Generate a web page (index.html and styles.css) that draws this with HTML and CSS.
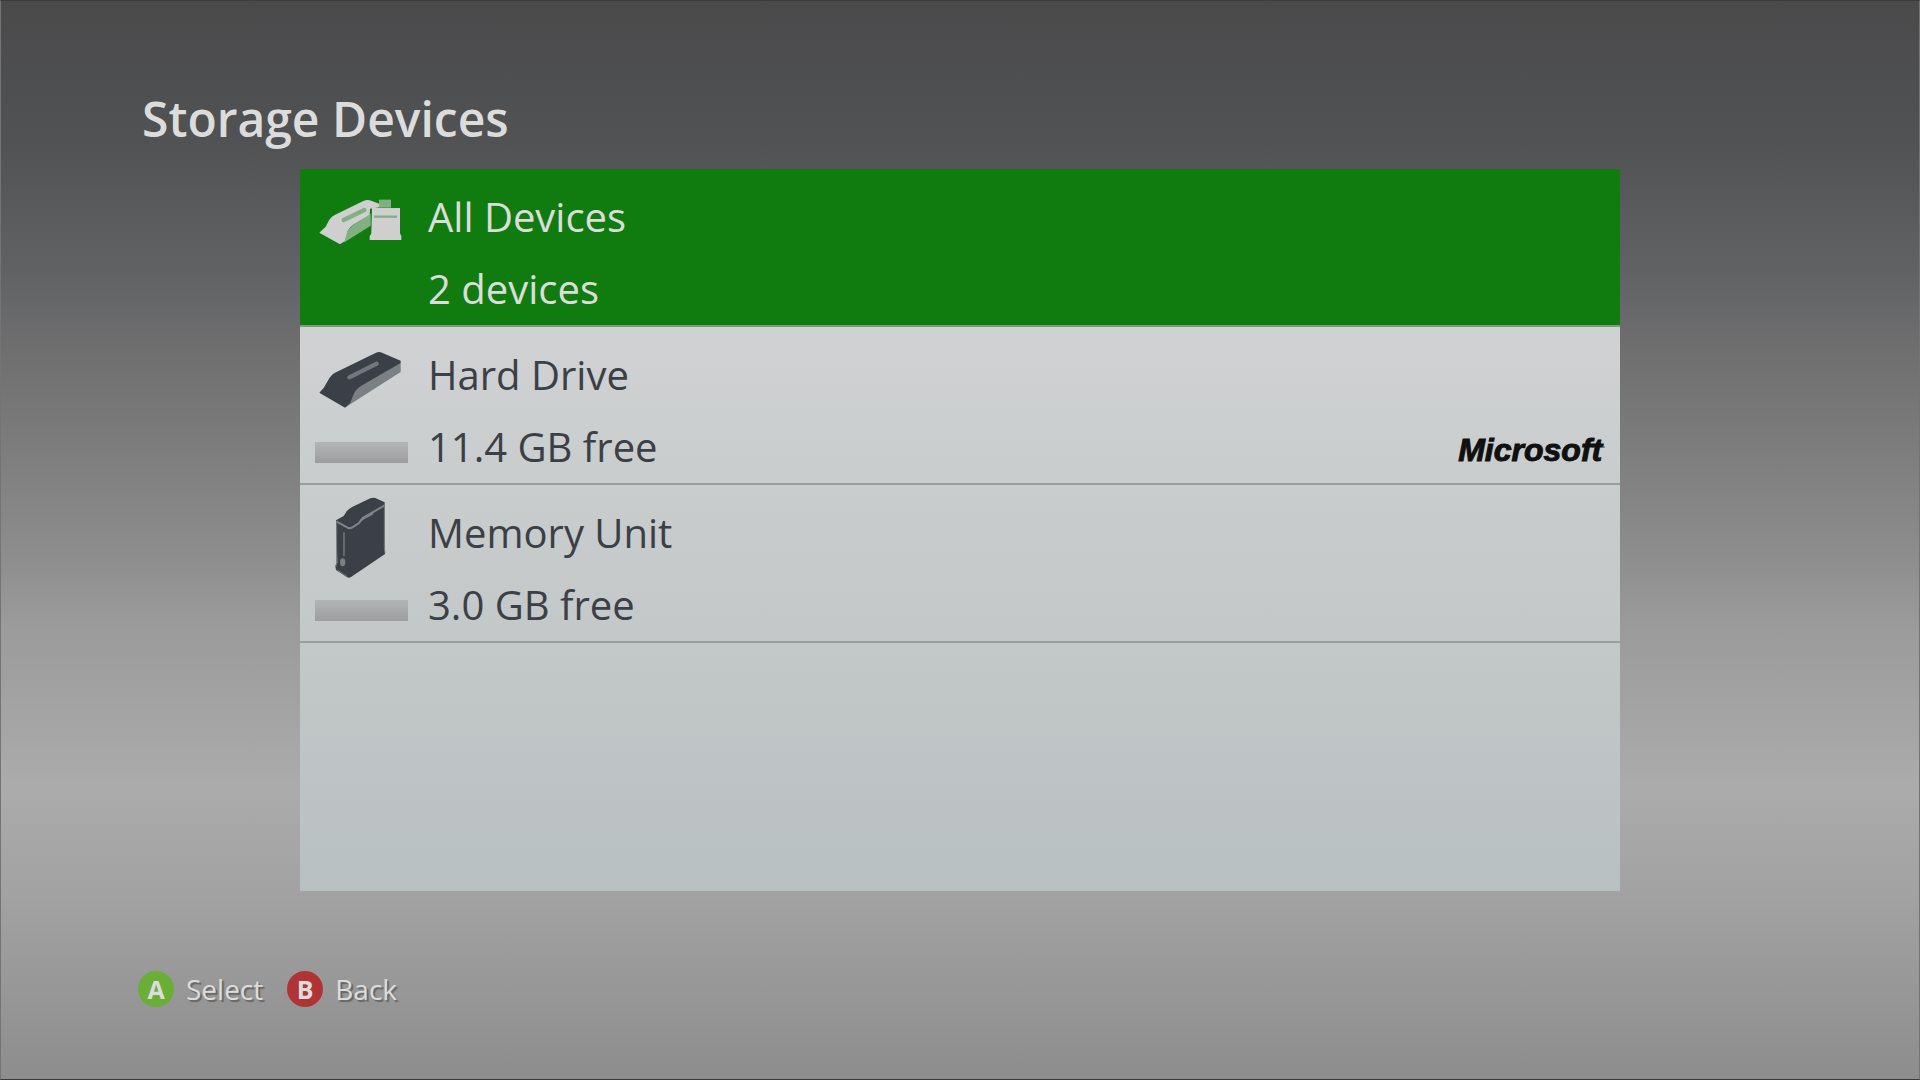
FILE: index.html
```html
<!DOCTYPE html>
<html lang="en">
	<head>
		<meta charset="UTF-8">
		<title>Storage Devices</title>
		<link rel="stylesheet" href="styles.css">
	</head>
	<body>
		<div class="screen">
			<h1 class="title">Storage Devices</h1>
			<ul class="deviceList">
				<li>
					<button type="button" class="device selected">
						<span class="media">
							<svg class="icon" viewBox="15 -33 279 345" aria-hidden="true">
								<path class="side" d="M90 191 L113 152 Q122 140 134 132 L182 101 L182 137 L108 184Z"/>
								<path d="M28 158 L47 140 L58 119 Q64 110 74 105 L160 63 Q172 57 184 62 L207 71 L209 82 L180 86 L179 104 L132 133 Q118 141 112 154 L104 182 L90 193Z"/>
								<path class="groove" d="M101 120 L163 90"/>
								<path class="side" d="M207 59 H243 V83 H207Z"/>
								<path d="M186 84 H270 V158 Q271 164 274 168 V180 H179 V168 Q184 164 184 158Z"/>
								<path class="seam" d="M192 110 H261"/>
							</svg>
						</span>
						<span class="info">
							<span class="line">All Devices</span>
							<span class="line">2 devices</span>
						</span>
					</button>
				</li>
				<li>
					<button type="button" class="device">
						<span class="media">
							<svg class="icon" viewBox="15 -39 279 345" aria-hidden="true">
								<path class="side" d="M107 202 L128 156 Q134 142 149 133 L272 65 V96 L158 169Z"/>
								<path d="M28 158 Q43 145 51 127 Q61 106 75 98 L198 38 Q208 34 216 38 L272 62 V69 L154 137 Q138 146 131 163 L121 188 L105 203Z"/>
								<path class="groove" d="M118 112 L200 71"/>
							</svg>
							<span class="space"></span>
						</span>
						<span class="info">
							<span class="line">Hard Drive</span>
							<span class="line">11.4 GB free</span>
						</span>
						<span class="brand">Microsoft<span class="mark">&bull;</span></span>
					</button>
				</li>
				<li>
					<button type="button" class="device">
						<span class="media">
							<svg class="icon" viewBox="15 0 279 345" aria-hidden="true">
								<path d="M78 106 L101 93 Q111 72 128 65 L181 40 Q189 37 196 39 L224 52 V190 L225 207 L122 277 Q116 280 110 276 L78 255 L76 243 L82 234 Z"/>
								<path class="rim" d="M79 109 L115 129 Q121 131 127 127 L147 114 L157 100 L224 61"/>
								<path class="rimFill" d="M145 115 Q151 101 163 94 L194 76 L188 89 L165 101Z"/>
								<path class="edge" d="M80 112 V234 L77 246 M223 65 V188 L225 204 M82 255 L112 275"/>
								<path class="slot" d="M102 142 V213"/>
								<ellipse class="side" cx="98" cy="232" rx="8" ry="12"/>
							</svg>
							<span class="space"></span>
						</span>
						<span class="info">
							<span class="line">Memory Unit</span>
							<span class="line">3.0 GB free</span>
						</span>
					</button>
				</li>
			</ul>
			<div class="legend">
				<button type="button" class="command"><span class="key keyA">A</span>Select</button>
				<button type="button" class="command"><span class="key keyB">B</span>Back</button>
			</div>
		</div>
	</body>
</html>
```
FILE: styles.css
```css
* {
	box-sizing: border-box;
}
body {
	margin: 0;
	font-family: "Open Sans", "Noto Sans", sans-serif;
	color: #dcdcdc;
}
button {
	font: inherit;
	color: inherit;
	background: none;
	border: 0;
	padding: 0;
	cursor: pointer;
}
.screen {
	display: flex;
	flex-direction: column;
	min-height: 100vh;
	padding: 84px 137px 71px;
	background: linear-gradient(#4a4a4b 0%, #515254 13%, #616264 25%, #6e6e6f 32%, #7c7c7c 41%, #8c8c8c 51%, #9b9b9c 58%, #ababab 73%, #a2a2a2 83%, #8d8d8e 100%);
	border: 1px solid #747475;
	border-top-color: #3c3c3d;
	border-bottom-color: #3a3a3a;
}
.title {
	margin: 0;
	padding-left: 4px;
	font-size: 48px;
	line-height: 68px;
	font-weight: 600;
}

/* device list */
.deviceList {
	flex: 1;
	list-style: none;
	margin: 16px 162px 0;
	padding: 0;
	background: linear-gradient(#d5d5d7 0%, #cfd1d3 25%, #c6caca 55%, #b9c0c2 100%);
}
.device {
	display: flex;
	width: 100%;
	padding: 0 15px;
	gap: 20px;
	border-bottom: 2px solid #979ea0;
	color: #3a4046;
	text-align: left;
}
.device.selected {
	background: #107c10;
	border-bottom-color: #7d9a80;
	color: #dcdcdc;
}
.media {
	display: flex;
	flex-direction: column;
	width: 93px;
}
.info {
	display: flex;
	flex-direction: column;
	flex: 1;
	padding-top: 12px;
}
.line {
	font-size: 40px;
	line-height: 72px;
}
.space {
	height: 21px;
	background: linear-gradient(#b4b5b6, #9c9d9f);
}
.brand {
	align-self: flex-end;
	padding-bottom: 15px;
	font-family: "Liberation Sans", Arial, sans-serif;
	font-size: 32px;
	line-height: 36px;
	font-weight: bold;
	font-style: italic;
	color: #101010;
	-webkit-text-stroke: 1px #101010;
}
.mark {
	font-size: 8px;
	vertical-align: 12px;
	color: #777;
	-webkit-text-stroke: 0;
}

/* icons */
.icon {
	width: 93px;
	height: 115px;
	fill: #3a4046;
}
.icon .side {
	fill: #7a8083;
}
.icon .groove {
	fill: none;
	stroke: #71777b;
	stroke-width: 13;
	stroke-linecap: round;
}
.icon .rim {
	fill: none;
	stroke: #7e8487;
	stroke-width: 6;
}
.icon .rimFill {
	fill: #7e8487;
}
.icon .edge {
	fill: none;
	stroke: #737a7e;
	stroke-width: 3;
}
.icon .slot {
	fill: none;
	stroke: #6d7377;
	stroke-width: 5;
}
.selected .icon {
	fill: #cfcfcf;
}
.selected .icon .side {
	fill: #83b083;
}
.selected .icon .groove {
	stroke: #83b083;
}
.selected .seam {
	fill: none;
	stroke: #83b083;
	stroke-width: 7;
}

/* button legend */
.legend {
	display: flex;
	gap: 24px;
	margin-top: 79px;
}
.command {
	display: flex;
	align-items: center;
	gap: 12px;
	font-size: 28px;
	line-height: 38px;
	text-shadow: 2px 2px 1px #666;
}
.key {
	width: 36px;
	height: 36px;
	border-radius: 50%;
	font-size: 25px;
	line-height: 36px;
	font-weight: bold;
	text-align: center;
	text-shadow: none;
}
.keyA {
	background: #6aae35;
}
.keyB {
	background: #b03435;
}
```
